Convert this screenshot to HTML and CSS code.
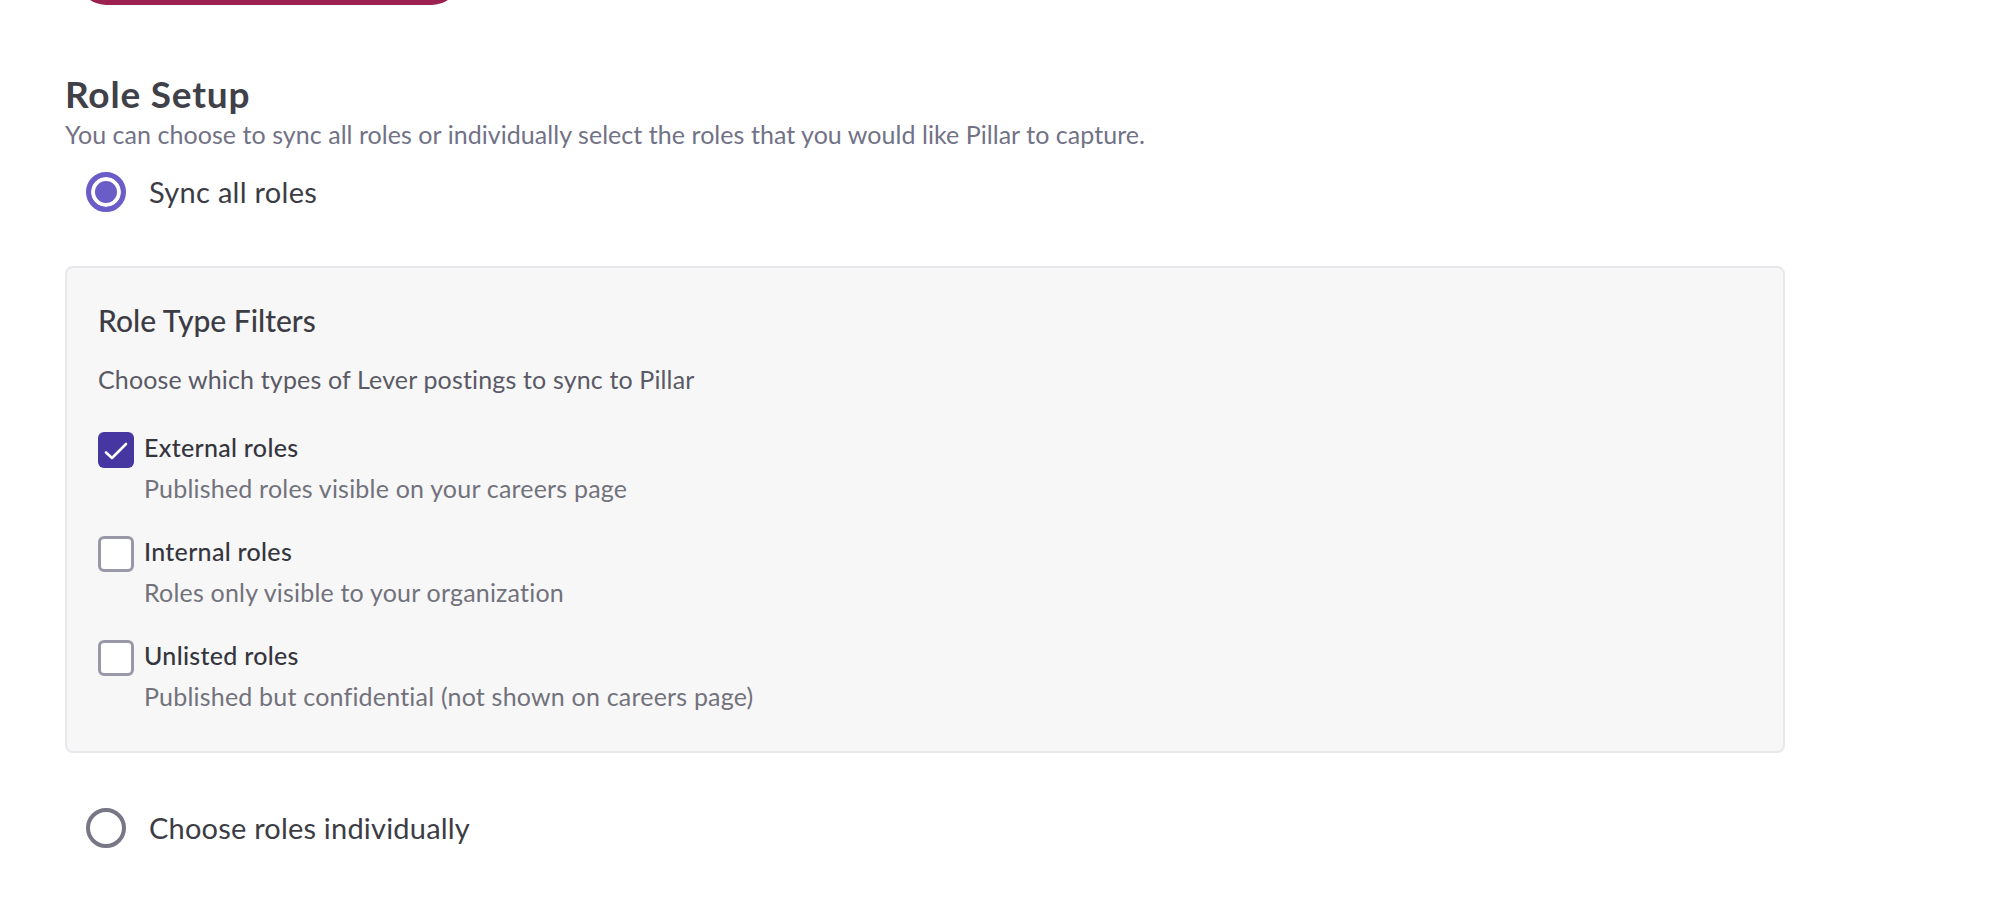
FILE: index.html
```html
<!DOCTYPE html>
<html>
<head>
<meta charset="utf-8">
<link rel="stylesheet" href="styles.css">
</head>
<body>
<div class="page">
  <div class="top-btn"></div>
  <h2 class="title">Role Setup</h2>
  <p class="subtitle">You can choose to sync all roles or individually select the roles that you would like Pillar to capture.</p>

  <label class="radio-row">
    <span class="radio checked"></span>
    <span class="radio-label">Sync all roles</span>
  </label>

  <div class="card">
    <div class="card-title">Role Type Filters</div>
    <div class="card-desc">Choose which types of Lever postings to sync to Pillar</div>
    <div class="opts">
      <div class="opt">
        <span class="box checked">
          <svg viewBox="0 0 36 36" width="36" height="36"><path d="M8 20.5 L14 26 L28 12" fill="none" stroke="#fff" stroke-width="2.6" stroke-linecap="round" stroke-linejoin="round"/></svg>
        </span>
        <div class="opt-text">
          <div class="opt-label">External roles</div>
          <div class="opt-desc">Published roles visible on your careers page</div>
        </div>
      </div>
      <div class="opt">
        <span class="box"></span>
        <div class="opt-text">
          <div class="opt-label">Internal roles</div>
          <div class="opt-desc">Roles only visible to your organization</div>
        </div>
      </div>
      <div class="opt">
        <span class="box"></span>
        <div class="opt-text">
          <div class="opt-label">Unlisted roles</div>
          <div class="opt-desc">Published but confidential (not shown on careers page)</div>
        </div>
      </div>
    </div>
  </div>

  <label class="radio-row second">
    <span class="radio"></span>
    <span class="radio-label second-label">Choose roles individually</span>
  </label>
</div>
</body>
</html>
```

FILE: styles.css
```css
html, body {
  margin: 0;
  padding: 0;
  background: #ffffff;
}
body {
  font-family: "Lato", "Liberation Sans", sans-serif;
  color: #3c3c45;
}
.page {
  padding: 0 65px;
  width: 1720px;
}
.top-btn {
  margin-top: -51px;
  margin-left: 13px;
  width: 382px;
  height: 56px;
  border-radius: 28px;
  background: #9c2150;
}
.title {
  margin: 67px 0 0 0;
  font-size: 37px;
  letter-spacing: 0.8px;
  line-height: 44px;
  font-weight: 700;
  color: #404049;
}
.subtitle {
  margin: 3px 0 0 0;
  font-size: 25px;
  letter-spacing: 0.05px;
  line-height: 30px;
  color: #727286;
}
.radio-row {
  display: flex;
  align-items: center;
  gap: 23px;
  margin-top: 23px;
  padding-left: 21px;
  height: 40px;
}
.radio-row.second {
  margin-top: 55px;
}
.radio {
  box-sizing: border-box;
  width: 40px;
  height: 40px;
  border-radius: 50%;
  border: 4px solid #777785;
  background: #fff;
  flex: none;
}
.radio.checked {
  border: 5px solid #6b5dc8;
  box-shadow: inset 0 0 0 4px #fff;
  background: #6b5dc8;
}
.radio-label {
  font-size: 29px;
  letter-spacing: 0.3px;
  line-height: 40px;
  color: #3c3c45;
}
.radio-label.second-label {
  letter-spacing: 0.2px;
}
.card {
  margin-top: 54px;
  box-sizing: border-box;
  width: 1720px;
  background: #f7f7f7;
  border: 2px solid #e7e7ec;
  border-radius: 8px;
  padding: 34px 31px 40px 31px;
}
.card-title {
  font-size: 30px;
  line-height: 36px;
  font-weight: 500;
  color: #3c3c45;
}
.card-desc {
  margin-top: 26px;
  font-size: 25px;
  letter-spacing: 0.15px;
  line-height: 30px;
  color: #5a5a66;
}
.opts {
  margin-top: 38px;
  display: flex;
  flex-direction: column;
  gap: 33px;
}
.opt {
  display: flex;
  align-items: flex-start;
  gap: 10px;
}
.box {
  box-sizing: border-box;
  width: 36px;
  height: 36px;
  border-radius: 6px;
  border: 3px solid #9898a8;
  background: #fff;
  flex: none;
  display: flex;
}
.box.checked {
  border: none;
  background: #4536a2;
}
.opt-label {
  font-size: 25px;
  letter-spacing: 0.3px;
  line-height: 30px;
  font-weight: 500;
  color: #35353e;
}
.opt-desc {
  margin-top: 11px;
  font-size: 25px;
  letter-spacing: 0.2px;
  line-height: 30px;
  color: #72727c;
}
```
